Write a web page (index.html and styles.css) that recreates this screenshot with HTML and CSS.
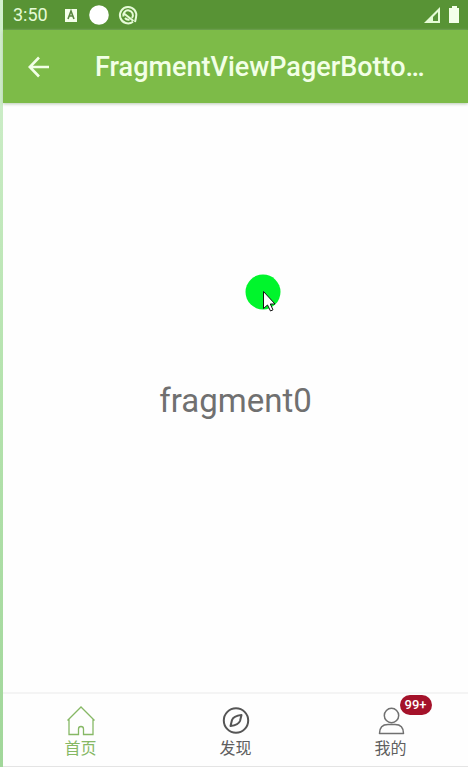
FILE: index.html
```html
<!DOCTYPE html>
<html lang="zh">
<head>
<meta charset="utf-8">
<meta name="viewport" content="width=device-width, initial-scale=1">
<title>FragmentViewPagerBottom</title>
<link rel="stylesheet" href="styles.css">
</head>
<body>
<div class="screen">
  <div class="status">
    <span class="time">3:50</span>
    <svg class="notices" width="76" height="22" viewBox="0 0 76 22" aria-hidden="true">
      <path d="M1 5h12v13H1z" fill="#f4ffea"/>
      <path d="M4 15l3-8 3 8M5 12h4" fill="none" stroke="#58853f" stroke-width="1.6"/>
      <circle cx="35" cy="11" r="9.8" fill="#fff"/>
      <g fill="none" stroke="#e6fbd7" stroke-width="2">
        <path d="M69 17.800A8.200 8.200 0 1 1 72 13.500L71 18"/>
        <path d="M59.500 12.500a4.800 4.800 0 1 1 8.500 1.500M60 9.500l9.500 7.500M61 14a4.500 4.500 0 0 0 4.500 1.500"/>
      </g>
    </svg>
    <svg class="system" width="36" height="20" viewBox="0 0 36 20" aria-hidden="true">
      <path d="M0 18L16 2v16z" fill="#e6fbd7"/>
      <path d="M9 12l5-5v9H9z" fill="#58943a"/>
      <path d="M25 3h3V1h5v2h2v15H25z" fill="#f4ffea"/>
    </svg>
  </div>
  <header class="bar">
    <button class="back" type="button" aria-label="Back">
      <svg width="22" height="22" viewBox="0 0 22 22" aria-hidden="true"><path d="M21 11H2M11 1.500L1.800 11l9.200 9.500" fill="none" stroke="#f2ffe6" stroke-width="2.600"/></svg>
    </button>
    <h1 class="title">FragmentViewPagerBotto…</h1>
  </header>
  <main class="content">
    <p class="label">fragment0</p>
    <svg class="pointer" width="38" height="40" viewBox="0 0 38 40" aria-hidden="true">
      <circle cx="18" cy="18" r="17.500" fill="#00f52c"/>
      <path d="M18.500 17.500v17l4-3.500 3 6 2.500-1.200-2.700-5.800H30z" fill="#fff" stroke="#111" stroke-width="1"/>
    </svg>
  </main>
  <nav class="tabs">
    <a class="tab active" href="#home">
      <svg width="30" height="32" viewBox="0 0 30 32" fill="none" stroke="currentColor" stroke-width="1.300" aria-hidden="true"><path d="M1.500 15.500L15 2l13.500 13.500M3 14v15.500h9.500V24a2.500 2.500 0 0 1 5 0v5.500H27V14"/></svg>
      <span>首页</span>
    </a>
    <a class="tab" href="#discover">
      <svg width="30" height="32" viewBox="0 0 30 32" fill="none" stroke="#555" stroke-width="2" stroke-linejoin="round" aria-hidden="true"><circle cx="15" cy="15.500" r="12.200"/><path d="M20.500 10q-8 1-9.500 5l-1.500 6q8-1 9.500-5z"/></svg>
      <span>发现</span>
    </a>
    <a class="tab" href="#mine">
      <span class="figure">
        <svg width="30" height="32" viewBox="0 0 30 32" fill="none" stroke="#707070" stroke-width="1.500" aria-hidden="true"><circle cx="15.500" cy="10.500" r="7.200"/><path d="M3.500 28.500c0-6 3.500-9 8.500-9h7c5 0 8.500 3 8.500 9z" stroke-linejoin="round"/></svg>
        <span class="badge">99+</span>
      </span>
      <span>我的</span>
    </a>
  </nav>
</div>
</body>
</html>
```
FILE: styles.css
```css
* { box-sizing: border-box; }

body {
  margin: 0;
  font-family: Roboto, "Noto Sans CJK SC", sans-serif;
  background: linear-gradient(#d3f0cf, #b5e3ae 50%, #a1d79a);
}

.screen {
  display: flex;
  flex-direction: column;
  min-height: 100vh;
  margin-left: 3px;
  background: #fefefe;
  border-bottom: 1px solid #e4e4e4;
}

.status {
  display: flex;
  align-items: center;
  height: 30px;
  padding: 0 8px 0 10px;
  background: #589335;
  color: #e6fbd7;
}

.time { font-size: 18px; line-height: 30px; }
.notices { margin-left: 16px; }
.system { margin-left: auto; }

.bar {
  display: flex;
  align-items: center;
  height: 73px;
  padding: 0 40px 0 13px;
  background: #7dbb48;
  box-shadow: 0 1px 3px #b9c8b4;
}

.back {
  display: flex;
  padding: 12px;
  border: 0;
  background: none;
}

.title {
  flex: 1;
  min-width: 0;
  margin: 0 0 0 33px;
  overflow: hidden;
  font-size: 27px;
  font-weight: 500;
  line-height: 36px;
  white-space: nowrap;
  color: #f2ffe6;
}

.content {
  position: relative;
  flex: 1;
  display: flex;
  align-items: center;
  justify-content: center;
  padding-top: 6px;
}

.label {
  margin: 0;
  font-size: 33px;
  line-height: 40px;
  color: #707070;
}

.pointer {
  position: absolute;
  left: 242px;
  top: 171px;
}

.tabs {
  display: flex;
  height: 74px;
  padding-top: 11px;
  border-top: 2px solid #f4f4f4;
}

.tab {
  flex: 1;
  display: flex;
  flex-direction: column;
  align-items: center;
  font-size: 16px;
  line-height: 24px;
  color: #5f5f5f;
  text-decoration: none;
}

.active { color: #86b865; }

.figure {
  position: relative;
  display: flex;
}

.badge {
  position: absolute;
  left: 24px;
  top: -10px;
  width: 32px;
  border-radius: 10px;
  background: #a4122a;
  color: #fff;
  font-size: 13px;
  font-weight: 500;
  line-height: 20px;
  text-align: center;
}
```
